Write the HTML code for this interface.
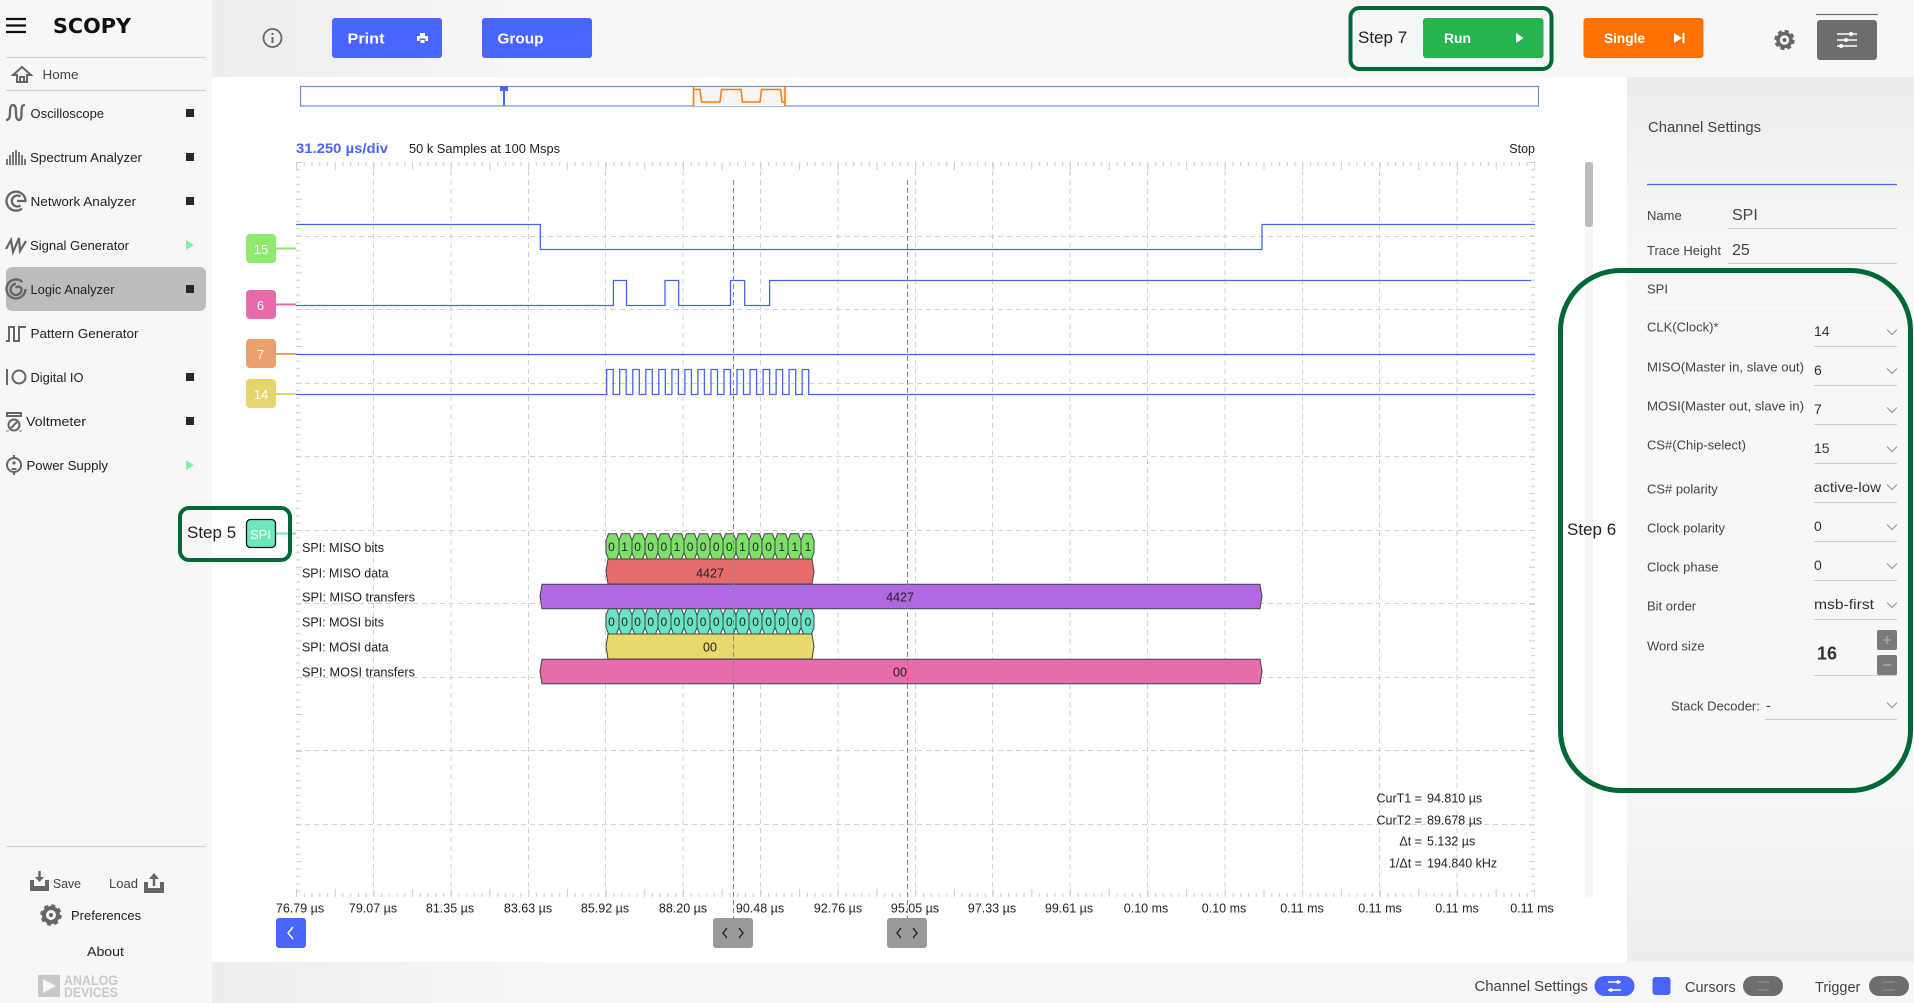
<!DOCTYPE html>
<html><head><meta charset="utf-8"><title>Scopy Logic Analyzer</title>
<style>
html,body{margin:0;padding:0;background:#fff;overflow:hidden}
svg{display:block}
text{font-family:"Liberation Sans",sans-serif;font-size:13px;fill:#222}
.g{fill:#444}
.s{font-size:12.5px;fill:#222}
.w{fill:#fff;font-size:14.5px;font-weight:bold}
.st{font-size:17px;fill:#222}
.v{font-size:14px;fill:#333}
.t{fill:#fff;font-size:13px;text-anchor:middle}
.c{text-anchor:middle;font-size:12.5px}
.i{fill:none;stroke:#666;stroke-width:2}
.ch{fill:none;stroke:#999;stroke-width:1.2}
.u{stroke:#ccc;stroke-width:1}
.box{fill:none;stroke:#006837;stroke-width:4}
</style></head><body>
<svg width="1914" height="1003" viewBox="0 0 1914 1003" xmlns="http://www.w3.org/2000/svg">
<defs>
<linearGradient id="tb" x1="0" x2="1" y1="0" y2="0"><stop offset="0" stop-color="#ededed"/><stop offset=".2" stop-color="#f7f7f7"/></linearGradient>
<linearGradient id="pn" x1="0" x2="0" y1="0" y2="1"><stop offset="0" stop-color="#ececec"/><stop offset=".2" stop-color="#f7f7f7"/><stop offset=".8" stop-color="#f7f7f7"/><stop offset="1" stop-color="#ededed"/></linearGradient>
<pattern id="tt" patternUnits="userSpaceOnUse" x="296" y="162" width="38.7" height="8"><path d="M.5 0V8M8.24 0V4M15.98 0V4M23.72 0V4M31.46 0V4" stroke="#ccc" fill="none"/></pattern>
<pattern id="bt" patternUnits="userSpaceOnUse" x="296" y="889" width="38.7" height="8"><path d="M.5 0V8M8.24 4V8M15.98 4V8M23.72 4V8M31.46 4V8" stroke="#ccc" fill="none"/></pattern>
<pattern id="lt" patternUnits="userSpaceOnUse" x="296" y="162" width="6" height="36.8"><path d="M0 .5H6M0 7.86H4M0 15.22H4M0 22.58H4M0 29.94H4" stroke="#ccc" fill="none"/></pattern>
<pattern id="rt" patternUnits="userSpaceOnUse" x="1529" y="162" width="6" height="36.8"><path d="M0 .5H6M2 7.86H6M2 15.22H6M2 22.58H6M2 29.94H6" stroke="#ccc" fill="none"/></pattern>
</defs>

<!-- backgrounds -->
<rect width="1914" height="1003" fill="#fff"/>
<rect x="0" y="0" width="212" height="1003" fill="#f7f7f7"/>
<rect x="212" y="0" width="1702" height="77" fill="url(#tb)"/>
<rect x="212" y="962" width="1702" height="41" fill="url(#tb)"/>
<rect x="1627" y="77" width="287" height="885" fill="url(#pn)"/>

<!-- sidebar top -->
<path d="M6 19H26M6 25.5H26M6 32H26" stroke="#111" stroke-width="2.2"/>
<text x="53" y="33" textLength="78" lengthAdjust="spacingAndGlyphs" style="font-family:'DejaVu Sans',sans-serif;font-size:20px;font-weight:bold;fill:#111">SCOPY</text>
<path d="M6 57.5H206M6 90.5H206M6 846.5H206" stroke="#d2d2d2" stroke-width="1.2"/>
<path class="i" d="M13 75 22 67 31 75H27V82H17V75ZM20 82V77H24V82"/>
<text x="42.5" y="79" textLength="36" lengthAdjust="spacingAndGlyphs" class="g">Home</text>

<rect x="6" y="267" width="200" height="44" rx="6" fill="#bcbcbc"/>

<!-- menu items -->
<text x="30.5" y="118" textLength="73.500" lengthAdjust="spacingAndGlyphs">Oscilloscope</text>
<text x="30" y="162" textLength="112" lengthAdjust="spacingAndGlyphs">Spectrum Analyzer</text>
<text x="30.5" y="206" textLength="105.500" lengthAdjust="spacingAndGlyphs">Network Analyzer</text>
<text x="30" y="250" textLength="99" lengthAdjust="spacingAndGlyphs">Signal Generator</text>
<text x="30.5" y="294" textLength="84" lengthAdjust="spacingAndGlyphs">Logic Analyzer</text>
<text x="30.5" y="338" textLength="108" lengthAdjust="spacingAndGlyphs">Pattern Generator</text>
<text x="30.5" y="382" textLength="53" lengthAdjust="spacingAndGlyphs">Digital IO</text>
<text x="26" y="426" textLength="60" lengthAdjust="spacingAndGlyphs">Voltmeter</text>
<text x="26.5" y="470" textLength="81.500" lengthAdjust="spacingAndGlyphs">Power Supply</text>

<g fill="#272730">
<rect x="186" y="109" width="8" height="8"/><rect x="186" y="153" width="8" height="8"/><rect x="186" y="197" width="8" height="8"/>
<rect x="186" y="285" width="8" height="8"/><rect x="186" y="373" width="8" height="8"/><rect x="186" y="417" width="8" height="8"/>
</g>
<path d="M186 240 194 245 186 250ZM186 460 194 465 186 470Z" fill="#7ef5a5"/>

<!-- menu icons -->
<path class="i" style="stroke-width:2.3" d="M6 120C9 120 10 118 10 112 10 107 11 105 13 105 15.500 105 16 108 16 113 16 118 17 120 19 120 21 120 21.500 118 21.500 112 21.500 107 22 105 25 105"/>
<path d="M7 165V159M10 165V155M13 165V152M16 165V150M19 165V152M22 165V155M25 165V159" stroke="#777" stroke-width="2"/>
<path class="i" style="stroke-width:2.3" d="M17 201H25.500A9.500 9.500 0 1 0 22 208.500M20.500 196.500A5.500 5.500 0 1 0 20.500 205.500"/>
<path class="i" style="stroke-width:2.2" d="M6 249 11 240 13 252 19 238 20 251 26 241"/>
<path class="i" style="stroke-width:2.4" d="M22.500 282A9.500 9.500 0 1 0 25.500 289M16 284A5.500 5.500 0 1 0 21.500 289 3 3 0 0 0 16 288"/>
<path class="i" d="M6 341H9V327H14V341H19V327H26"/>
<path class="i" d="M7 369V385"/><circle class="i" cx="19" cy="377" r="6.500"/>
<rect class="i" x="7" y="413" width="14" height="3"/><circle class="i" cx="14" cy="425" r="5.500"/><path class="i" d="M11 428 17 422"/><path d="M6 431H9M19 431H22" stroke="#777"/>
<circle class="i" cx="14" cy="465" r="7"/><path class="i" d="M14 455V458M14 472V475M11.500 469H16.500"/><circle cx="14" cy="463" r="1.600" fill="#666"/>

<!-- sidebar bottom -->
<path d="M30 880H34V886H45V880H49V891H30Z" fill="#666"/>
<path d="M39.500 871V881" stroke="#666" stroke-width="2.500"/><path d="M35 877 39.500 882 44 877" fill="#666"/>
<text x="53" y="888" class="g" textLength="28" lengthAdjust="spacingAndGlyphs">Save</text>
<text x="109" y="888" class="g" textLength="29" lengthAdjust="spacingAndGlyphs">Load</text>
<path d="M144 882H148V888H160V882H164V893H144Z" fill="#666"/><path d="M154 874V886" stroke="#666" stroke-width="2.500"/><path d="M149 879 154 873 159 879" fill="#666"/>
<circle cx="51" cy="915" r="7" fill="none" stroke="#666" stroke-width="4"/><circle cx="51" cy="915" r="9.500" fill="none" stroke="#666" stroke-width="2.500" stroke-dasharray="4 3.460"/><circle cx="51" cy="915" r="2" fill="#666"/>
<text x="71" y="920">Preferences</text>
<text x="87" y="956" textLength="37" lengthAdjust="spacingAndGlyphs">About</text>
<rect x="38" y="975" width="22" height="22" fill="#c8c8c8"/><path d="M43 979V993L56 986Z" fill="#f7f7f7"/>
<text x="64" y="985" textLength="54" lengthAdjust="spacingAndGlyphs" style="font-size:14px;font-weight:bold;fill:#c8c8c8">ANALOG</text>
<text x="64" y="997" textLength="54" lengthAdjust="spacingAndGlyphs" style="font-size:14px;font-weight:bold;fill:#c8c8c8">DEVICES</text>

<!-- top bar -->
<circle cx="272.500" cy="38" r="9" fill="none" stroke="#666" stroke-width="1.800"/><path d="M272.500 37V43M272.500 33V35" stroke="#666" stroke-width="2"/>
<rect x="332" y="18" width="110" height="40" rx="3" fill="#4a64ff"/>
<text class="w" x="347.500" y="43.500" textLength="37" lengthAdjust="spacingAndGlyphs">Print</text>
<path d="M420 33H425V36H428V41H425.500V38.500H419.500V41H417V36H420ZM420.500 40H424.500V43H420.500Z" fill="#fff"/>
<rect x="482" y="18" width="110" height="40" rx="3" fill="#4a64ff"/>
<text class="w" x="497.500" y="43.500" textLength="46" lengthAdjust="spacingAndGlyphs">Group</text>

<rect x="1423" y="18" width="120.500" height="40" rx="3" fill="#27b34f"/>
<text class="w" x="1444" y="43" textLength="27" lengthAdjust="spacingAndGlyphs" style="font-size:14px">Run</text>
<path d="M1516 33 1523.500 38 1516 43Z" fill="#fff"/>
<rect class="box" x="1350.500" y="8" width="201" height="61" rx="9"/>
<text class="st" x="1358" y="43">Step 7</text>

<rect x="1583.500" y="18" width="120" height="40" rx="3" fill="#ff7200"/>
<text class="w" x="1604" y="43" textLength="41" lengthAdjust="spacingAndGlyphs" style="font-size:14px">Single</text>
<path d="M1674 33 1682 38 1674 43Z" fill="#fff"/><path d="M1683.500 33V43" stroke="#fff" stroke-width="2"/>

<circle cx="1784.500" cy="40" r="6.500" fill="none" stroke="#666" stroke-width="3.600"/><circle cx="1784.500" cy="40" r="9" fill="none" stroke="#666" stroke-width="2.400" stroke-dasharray="4 3.070"/><circle cx="1784.500" cy="40" r="2" fill="#666"/>
<path d="M1816 14.500H1878" stroke="#6d6d6d" stroke-width="1.200"/>
<rect x="1817" y="20" width="60" height="40" rx="3" fill="#6d6d6d"/>
<path d="M1837 34H1857M1837 40H1857M1837 46H1857" stroke="#fff" stroke-width="1.500"/>
<circle cx="1851" cy="34" r="2" fill="#fff"/><circle cx="1846" cy="40" r="2" fill="#fff"/><circle cx="1841" cy="46" r="2" fill="#fff"/>

<!-- overview -->
<rect x="300.500" y="86.500" width="1238" height="19.500" fill="#fff" stroke="#6f93c9" stroke-width="1.200"/>
<rect x="693" y="87" width="92" height="19" fill="#f5f5f5"/>
<path d="M693.500 87V106M785 87V106" stroke="#ff7a12" stroke-width="1.600"/>
<path d="M693 89.500H700L701.500 102H720L721.500 89.500H741L742.500 102H760L761.500 89.500H780.500L782 102H785" fill="none" stroke="#ff7a12" stroke-width="1.500"/>
<path d="M504 88V105.500" stroke="#4a64ff" stroke-width="2"/><rect x="500" y="86" width="8" height="5" fill="#4a64ff"/>

<text x="296" y="153" textLength="92" lengthAdjust="spacingAndGlyphs" style="font-size:13.500px;font-weight:bold;fill:#4a64ff">31.250 µs/div</text>
<text x="409" y="153" class="s" textLength="151" lengthAdjust="spacingAndGlyphs">50 k Samples at 100 Msps</text>
<text x="1535" y="153" class="s" text-anchor="end">Stop</text>

<!-- ticks -->
<rect x="296" y="162" width="1239" height="8" fill="url(#tt)"/>
<rect x="296" y="889" width="1239" height="8" fill="url(#bt)"/>
<rect x="296" y="162" width="6" height="735" fill="url(#lt)"/>
<rect x="1529" y="162" width="6" height="735" fill="url(#rt)"/>

<!-- grid -->
<path d="M296 236.500H1535M296 309.500H1535M296 383.500H1535M296 456.500H1535M296 530.500H1535M296 603.500H1535M296 677.500H1535M296 750.500H1535M296 824.500H1535" stroke="#d2d2d2" stroke-dasharray="5 4" fill="none"/>
<path d="M373.500 162V897M451 162V897M528.500 162V897M605.500 162V897M683 162V897M760.500 162V897M838 162V897M915.500 162V897M992.500 162V897M1070 162V897M1147.500 162V897M1225 162V897M1302.500 162V897M1379.500 162V897M1457 162V897" stroke="#d2d2d2" stroke-dasharray="5 4" fill="none"/>

<!-- scrollbar -->
<rect x="1585" y="162" width="8" height="736" fill="#f7f7f7"/>
<rect x="1585" y="162" width="8" height="65" rx="3" fill="#bcbcbc"/>

<!-- traces -->
<g fill="none" stroke="#4a64e8" stroke-width="1.300">
<path d="M296 224.500H540.300V249.500H1262V224.500H1535"/>
<path d="M296 305.500H613.400V280.500H626.500V305.500H665V280.500H678.700V305.500H730.500V280.500H744.700V305.500H769.600V280.500H1531"/>
<path d="M296 354.500H1535"/>
<path d="M296 394.500H606.700V369.500H613.200V394.500H619.700V369.500H626.200V394.500H632.800V369.500H639.300V394.500H645.800V369.500H652.300V394.500H658.800V369.500H665.300V394.500H671.900V369.500H678.400V394.500H684.900V369.500H691.400V394.500H697.900V369.500H704.400V394.500H711V369.500H717.500V394.500H724V369.500H730.500V394.500H737V369.500H743.500V394.500H750V369.500H756.600V394.500H763.100V369.500H769.600V394.500H776.100V369.500H782.600V394.500H789.100V369.500H795.700V394.500H802.200V369.500H808.700V394.500H1535"/>
</g>

<!-- channel tags -->
<path d="M276 248.500H296" stroke="#8ee96e" stroke-width="2"/><path d="M276 304.500H296" stroke="#e86aab" stroke-width="2"/><path d="M276 354H296" stroke="#e8a06d" stroke-width="2"/><path d="M276 394H296" stroke="#e6d46f" stroke-width="2"/><path d="M276 533.500H296" stroke="#6de8bb" stroke-width="2"/>
<rect x="246" y="234" width="30" height="29" rx="4" fill="#8ee96e"/><text class="t" x="261" y="254">15</text>
<rect x="246" y="290" width="30" height="29" rx="4" fill="#e86aab"/><text class="t" x="260.500" y="310">6</text>
<rect x="246" y="339" width="30" height="29" rx="4" fill="#e8a06d"/><text class="t" x="260.500" y="359">7</text>
<rect x="246" y="379" width="30" height="29" rx="4" fill="#e6d46f"/><text class="t" x="261" y="399">14</text>
<rect x="246.500" y="519.500" width="29" height="28" rx="4" fill="#6de8bb" stroke="#111" stroke-width="1.300"/><text class="t" x="260.500" y="539">SPI</text>
<rect class="box" x="180" y="508" width="110" height="52" rx="9"/>
<text class="st" x="187" y="538">Step 5</text>

<!-- decoder labels -->
<text x="302" y="552" class="s" textLength="82" lengthAdjust="spacingAndGlyphs">SPI: MISO bits</text>
<text x="302" y="577.500" class="s" textLength="86.500" lengthAdjust="spacingAndGlyphs">SPI: MISO data</text>
<text x="302" y="601.500" class="s" textLength="113" lengthAdjust="spacingAndGlyphs">SPI: MISO transfers</text>
<text x="302" y="626.500" class="s" textLength="82" lengthAdjust="spacingAndGlyphs">SPI: MOSI bits</text>
<text x="302" y="651.500" class="s" textLength="86.500" lengthAdjust="spacingAndGlyphs">SPI: MOSI data</text>
<text x="302" y="676.500" class="s" textLength="113" lengthAdjust="spacingAndGlyphs">SPI: MOSI transfers</text>

<!-- decoder rows -->
<g stroke="#444" stroke-width="1">
<path fill="#7ee06a" d="M606 540.500l2.500-6.700h8l2.500 6.700v12l-2.500 6.700h-8l-2.500-6.700zm13 0l2.500-6.700h8l2.500 6.700v12l-2.500 6.700h-8l-2.500-6.700zm13 0l2.500-6.700h8l2.500 6.700v12l-2.500 6.700h-8l-2.500-6.700zm13 0l2.500-6.700h8l2.500 6.700v12l-2.500 6.700h-8l-2.500-6.700zm13 0l2.500-6.700h8l2.500 6.700v12l-2.500 6.700h-8l-2.500-6.700zm13 0l2.500-6.700h8l2.500 6.700v12l-2.500 6.700h-8l-2.500-6.700zm13 0l2.500-6.700h8l2.500 6.700v12l-2.500 6.700h-8l-2.500-6.700zm13 0l2.500-6.700h8l2.500 6.700v12l-2.500 6.700h-8l-2.500-6.700zm13 0l2.500-6.700h8l2.500 6.700v12l-2.500 6.700h-8l-2.500-6.700zm13 0l2.500-6.700h8l2.500 6.700v12l-2.500 6.700h-8l-2.500-6.700zm13 0l2.500-6.700h8l2.500 6.700v12l-2.500 6.700h-8l-2.500-6.700zm13 0l2.500-6.700h8l2.500 6.700v12l-2.500 6.700h-8l-2.500-6.700zm13 0l2.500-6.700h8l2.500 6.700v12l-2.500 6.700h-8l-2.500-6.700zm13 0l2.500-6.700h8l2.500 6.700v12l-2.500 6.700h-8l-2.500-6.700zm13 0l2.500-6.700h8l2.500 6.700v12l-2.500 6.700h-8l-2.500-6.700zm13 0l2.500-6.700h8l2.500 6.700v12l-2.500 6.700h-8l-2.500-6.700z"/>
<path fill="#e66c6c" d="M606 571.500 608 559H812L814 571.500 812 584H608Z"/>
<path fill="#b068e4" d="M540 596.500 542 584.300H1260L1262 596.500 1260 608.700H542Z"/>
<path fill="#68e4c4" d="M606 615.400l2.500-6.700h8l2.500 6.700v12l-2.500 6.700h-8l-2.500-6.700zm13 0l2.500-6.700h8l2.500 6.700v12l-2.500 6.700h-8l-2.500-6.700zm13 0l2.500-6.700h8l2.500 6.700v12l-2.500 6.700h-8l-2.500-6.700zm13 0l2.500-6.700h8l2.500 6.700v12l-2.500 6.700h-8l-2.500-6.700zm13 0l2.500-6.700h8l2.500 6.700v12l-2.500 6.700h-8l-2.500-6.700zm13 0l2.500-6.700h8l2.500 6.700v12l-2.500 6.700h-8l-2.500-6.700zm13 0l2.500-6.700h8l2.500 6.700v12l-2.500 6.700h-8l-2.500-6.700zm13 0l2.500-6.700h8l2.500 6.700v12l-2.500 6.700h-8l-2.500-6.700zm13 0l2.500-6.700h8l2.500 6.700v12l-2.500 6.700h-8l-2.500-6.700zm13 0l2.500-6.700h8l2.500 6.700v12l-2.500 6.700h-8l-2.500-6.700zm13 0l2.500-6.700h8l2.500 6.700v12l-2.500 6.700h-8l-2.500-6.700zm13 0l2.500-6.700h8l2.500 6.700v12l-2.500 6.700h-8l-2.500-6.700zm13 0l2.500-6.700h8l2.500 6.700v12l-2.500 6.700h-8l-2.500-6.700zm13 0l2.500-6.700h8l2.500 6.700v12l-2.500 6.700h-8l-2.500-6.700zm13 0l2.500-6.700h8l2.500 6.700v12l-2.500 6.700h-8l-2.500-6.700zm13 0l2.500-6.700h8l2.500 6.700v12l-2.500 6.700h-8l-2.500-6.700z"/>
<path fill="#e6da6c" d="M606 646.500 608 634H812L814 646.500 812 659H608Z"/>
<path fill="#e66cac" d="M540 671.500 542 659.300H1260L1262 671.500 1260 683.700H542Z"/>
</g>
<text x="608.100 621.200 634.300 647.400 660.500 673.600 686.700 699.800 712.900 726 739.100 752.200 765.300 778.400 791.500 804.600" y="551" style="font-size:12px">0100010000100111</text>
<text x="608.100 621.200 634.300 647.400 660.500 673.600 686.700 699.800 712.900 726 739.100 752.200 765.300 778.400 791.500 804.600" y="626" style="font-size:12px">0000000000000000</text>
<text x="710" y="577.500" class="c">4427</text>
<text x="900" y="601.500" class="c">4427</text>
<text x="710" y="651.500" class="c">00</text>
<text x="900" y="676.500" class="c">00</text>

<!-- cursors -->
<path d="M733.500 180V918M907.500 180V918" stroke="#888" stroke-dasharray="5 3" fill="none"/>

<!-- measurements -->
<text x="1422" y="802.500" class="s" text-anchor="end">CurT1 =</text><text x="1427" y="802.500" class="s">94.810 µs</text>
<text x="1422" y="824.500" class="s" text-anchor="end">CurT2 =</text><text x="1427" y="824.500" class="s">89.678 µs</text>
<text x="1422" y="845.500" class="s" text-anchor="end">Δt =</text><text x="1427" y="845.500" class="s">5.132 µs</text>
<text x="1422" y="867.500" class="s" text-anchor="end">1/Δt =</text><text x="1427" y="867.500" class="s">194.840 kHz</text>

<!-- axis labels -->
<g>
<text class="c" x="300" y="912.500">76.79 µs</text>
<text class="c" x="373" y="912.500">79.07 µs</text>
<text class="c" x="450" y="912.500">81.35 µs</text>
<text class="c" x="528" y="912.500">83.63 µs</text>
<text class="c" x="605" y="912.500">85.92 µs</text>
<text class="c" x="683" y="912.500">88.20 µs</text>
<text class="c" x="760" y="912.500">90.48 µs</text>
<text class="c" x="838" y="912.500">92.76 µs</text>
<text class="c" x="915" y="912.500">95.05 µs</text>
<text class="c" x="992" y="912.500">97.33 µs</text>
<text class="c" x="1069" y="912.500">99.61 µs</text>
<text class="c" x="1146" y="912.500">0.10 ms</text>
<text class="c" x="1224" y="912.500">0.10 ms</text>
<text class="c" x="1302" y="912.500">0.11 ms</text>
<text class="c" x="1380" y="912.500">0.11 ms</text>
<text class="c" x="1457" y="912.500">0.11 ms</text>
<text class="c" x="1532" y="912.500">0.11 ms</text>
</g>

<!-- bottom handles -->
<rect x="276" y="918" width="30" height="30" rx="3" fill="#4a64ff"/><path d="M293 927 288 933 293 939" fill="none" stroke="#fff" stroke-width="1.500"/>
<rect x="713" y="918" width="40" height="30" rx="3" fill="#999"/><path d="M727 928 723 933 727 938M739 928 743 933 739 938" fill="none" stroke="#222" stroke-width="1.400"/>
<rect x="887" y="918" width="40" height="30" rx="3" fill="#999"/><path d="M901 928 897 933 901 938M913 928 917 933 913 938" fill="none" stroke="#222" stroke-width="1.400"/>

<!-- right panel -->
<text x="1648" y="132" textLength="113" lengthAdjust="spacingAndGlyphs" style="font-size:14.500px;fill:#444">Channel Settings</text>
<path d="M1647 184.500H1897" stroke="#4a64ff" stroke-width="1.200"/>
<text x="1647" y="220" class="g">Name</text><text x="1732" y="220" style="font-size:16px;fill:#444">SPI</text><path class="u" d="M1728 228.500H1897"/>
<text x="1647" y="255" class="g">Trace Height</text><text x="1732" y="255" style="font-size:16px;fill:#444">25</text><path class="u" d="M1728 263.500H1897"/>
<text x="1647" y="293.500" class="g">SPI</text><path d="M1647 307.500H1897" stroke="#fff"/>

<text x="1647" y="331.500" class="g">CLK(Clock)*</text><text x="1814" y="336" class="v">14</text><path class="u" d="M1814 346.500H1897"/><path class="ch" d="M1887 329.500 1892 334.500 1897 329.500"/>
<text x="1647" y="371.500" class="g" textLength="157" lengthAdjust="spacingAndGlyphs">MISO(Master in, slave out)</text><text x="1814" y="375" class="v">6</text><path class="u" d="M1814 385.500H1897"/><path class="ch" d="M1887 368.500 1892 373.500 1897 368.500"/>
<text x="1647" y="410.500" class="g" textLength="157" lengthAdjust="spacingAndGlyphs">MOSI(Master out, slave in)</text><text x="1814" y="414" class="v">7</text><path class="u" d="M1814 424.500H1897"/><path class="ch" d="M1887 407.500 1892 412.500 1897 407.500"/>
<text x="1647" y="449.500" class="g">CS#(Chip-select)</text><text x="1814" y="453" class="v">15</text><path class="u" d="M1814 463.500H1897"/><path class="ch" d="M1887 446.500 1892 451.500 1897 446.500"/>
<text x="1647" y="493.500" class="g">CS# polarity</text><text x="1814" y="492" class="v" textLength="67" lengthAdjust="spacingAndGlyphs">active-low</text><path class="u" d="M1814 502.500H1897"/><path class="ch" d="M1887 484.500 1892 489.500 1897 484.500"/>
<text x="1647" y="532.500" class="g">Clock polarity</text><text x="1814" y="531" class="v">0</text><path class="u" d="M1814 541.500H1897"/><path class="ch" d="M1887 524.500 1892 529.500 1897 524.500"/>
<text x="1647" y="571.500" class="g">Clock phase</text><text x="1814" y="570" class="v">0</text><path class="u" d="M1814 580.500H1897"/><path class="ch" d="M1887 563.500 1892 568.500 1897 563.500"/>
<text x="1647" y="610.500" class="g">Bit order</text><text x="1814" y="609" class="v" textLength="60" lengthAdjust="spacingAndGlyphs">msb-first</text><path class="u" d="M1814 619.500H1897"/><path class="ch" d="M1887 602.500 1892 607.500 1897 602.500"/>
<text x="1647" y="650.500" class="g">Word size</text>
<text x="1817" y="659.500" style="font-size:18px;font-weight:bold;fill:#333">16</text><path class="u" d="M1814 675.500H1897"/>
<rect x="1877" y="630" width="20" height="20" rx="2" fill="#7a7a7a"/><path d="M1883 640H1891M1887 636V644" stroke="#aaa" stroke-width="1.500"/>
<rect x="1877" y="655" width="20" height="20" rx="2" fill="#7a7a7a"/><path d="M1883 665H1891" stroke="#aaa" stroke-width="1.500"/>
<text x="1671" y="710.500" class="g">Stack Decoder:</text><text x="1766" y="710" class="v">-</text><path class="u" d="M1765 719.500H1897"/><path class="ch" d="M1887 702.500 1892 707.500 1897 702.500"/>

<rect x="1560.500" y="270.500" width="350" height="520" rx="60" fill="none" stroke="#006837" stroke-width="5"/>
<text class="st" x="1567" y="535">Step 6</text>

<!-- bottom bar -->
<text x="1474.500" y="991" textLength="113.500" lengthAdjust="spacingAndGlyphs" style="font-size:14.500px;fill:#444">Channel Settings</text>
<rect x="1594.500" y="976" width="40" height="20" rx="10" fill="#4a64ff"/>
<path d="M1608 982H1621M1608 990H1621" stroke="#fff" stroke-width="1.500"/><circle cx="1618" cy="982" r="1.800" fill="#fff"/><circle cx="1611" cy="990" r="1.800" fill="#fff"/>
<rect x="1652.500" y="977" width="18" height="18" rx="3" fill="#4a64ff"/>
<text x="1685" y="992" style="font-size:14.500px;fill:#444">Cursors</text>
<rect x="1743" y="976" width="40" height="20" rx="10" fill="#6d6d6d"/>
<path d="M1757 982H1769M1757 990H1769" stroke="#8a8a8a" stroke-width="1.500"/>
<text x="1815" y="992" style="font-size:14.500px;fill:#444">Trigger</text>
<rect x="1869" y="976" width="40" height="20" rx="10" fill="#6d6d6d"/>
<path d="M1883 982H1895M1883 990H1895" stroke="#8a8a8a" stroke-width="1.500"/>
</svg>
</body></html>
